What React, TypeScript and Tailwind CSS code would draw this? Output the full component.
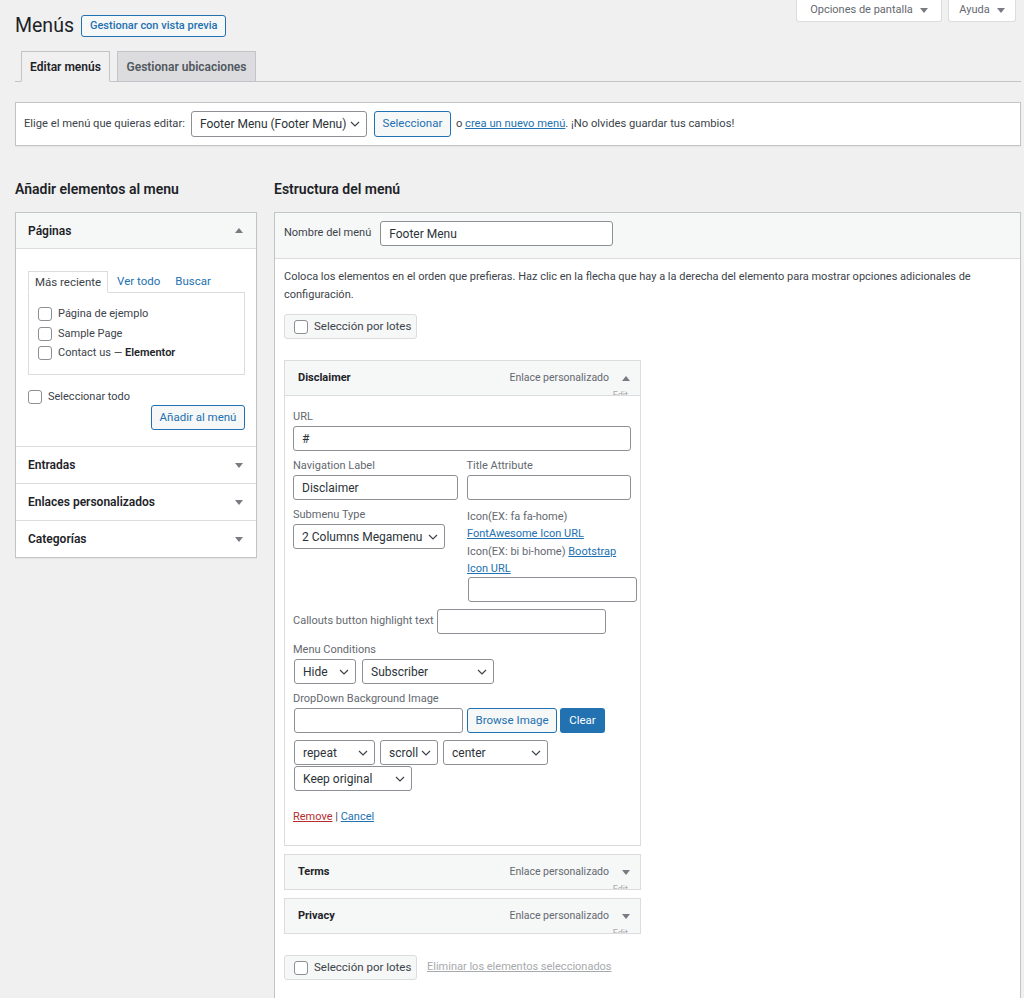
import React from "react";

function Tri({ up = false }: { up?: boolean }) {
  return (
    <svg width="8" height="5" viewBox="0 0 8 5" className="shrink-0">
      <path d={up ? "M0 5L4 0L8 5Z" : "M0 0L8 0L4 5Z"} fill="#787c82" />
    </svg>
  );
}

function Chevron() {
  return (
    <svg width="10" height="6" viewBox="0 0 10 6" className="shrink-0">
      <path d="M1 1l4 4 4-4" stroke="#3c434a" strokeWidth="1.2" fill="none" />
    </svg>
  );
}

function Box() {
  return <span className="inline-block h-[14px] w-[14px] shrink-0 rounded-[3px] border border-[#8c8f94] bg-white" />;
}

function Select({ value, w }: { value: string; w: string }) {
  return (
    <div className={`flex h-[25px] items-center justify-between rounded-[3px] border border-[#8c8f94] bg-white pl-[8px] pr-[6px] text-[12px] text-[#2c3338] ${w}`}>
      <span className="whitespace-nowrap">{value}</span>
      <Chevron />
    </div>
  );
}

function Field({ value = "", w }: { value?: string; w: string }) {
  return (
    <input
      readOnly
      value={value}
      className={`h-[25px] rounded-[3px] border border-[#8c8f94] bg-white px-[8px] text-[12px] text-[#2c3338] outline-none ${w}`}
    />
  );
}

function ScreenTab({ label, w }: { label: string; w: string }) {
  return (
    <div className={`flex h-[22px] items-center justify-center gap-[7px] rounded-b-[3px] border border-t-0 border-[#dcdcde] bg-white text-[11px] text-[#646970] ${w}`}>
      {label}
      <Tri />
    </div>
  );
}

function ItemHead({ title, open = false }: { title: string; open?: boolean }) {
  return (
    <div className="relative flex h-[36px] items-center justify-between overflow-hidden border border-[#dcdcde] bg-[#f6f7f7] pl-[13px] pr-[10px]">
      <span className="text-[11px] font-bold text-[#1d2327]">{title}</span>
      <div className="flex items-center gap-[13px]">
        <span className="text-[10.5px] text-[#646970]">Enlace personalizado</span>
        <Tri up={open} />
      </div>
      <span className="absolute bottom-[-7px] right-[12px] text-[9px] text-[#a7aaad]">Edit</span>
    </div>
  );
}

function Label({ children }: { children: React.ReactNode }) {
  return <div className="mb-[2px] text-[11px] leading-[14px] text-[#646970]">{children}</div>;
}

function BatchButton() {
  return (
    <div className="flex h-[25px] w-[133px] items-center gap-[6px] rounded-[3px] border border-[#dcdcde] bg-[#f6f7f7] pl-[9px] text-[11.5px] text-[#3c434a]">
      <Box />
      Selección por lotes
    </div>
  );
}

const pages = ["Página de ejemplo", "Sample Page"];
const sections = ["Entradas", "Enlaces personalizados", "Categorías"];

export default function App() {
  return (
    <div className="min-h-[998px] overflow-hidden bg-[#f0f0f1] pl-[15px] pr-[3px] font-['Roboto',sans-serif] text-[11px] text-[#3c434a]">
      <div className="flex items-start justify-between">
        <div className="flex items-center gap-[7px] pt-[13px]">
          <h1 className="text-[19.5px] leading-[26px] text-[#1d2327]">Menús</h1>
          <button className="h-[22px] rounded-[3px] border border-[#2271b1] bg-[#f6f7f7] px-[8px] text-[11px] font-medium text-[#2271b1]">
            Gestionar con vista previa
          </button>
        </div>
        <div className="mr-[5px] flex gap-[6px]">
          <ScreenTab label="Opciones de pantalla" w="w-[146px]" />
          <ScreenTab label="Ayuda" w="w-[68px]" />
        </div>
      </div>

      <div className="mt-[12px] flex gap-[7px] border-b border-[#c3c4c7] pl-[6px]">
        <div className="-mb-px flex h-[31px] w-[89px] items-center justify-center border border-[#c3c4c7] border-b-[#f0f0f1] bg-[#f0f0f1] text-[12px] font-semibold text-[#1d2327]">
          Editar menús
        </div>
        <div className="flex h-[30px] w-[139px] items-center justify-center border border-b-0 border-[#c3c4c7] bg-[#dcdcde] text-[12px] font-semibold text-[#50575e]">
          Gestionar ubicaciones
        </div>
      </div>

      <div className="mt-[20px] flex h-[44px] items-center border border-[#c3c4c7] bg-white pl-[8px] text-[11.2px] shadow-[0_1px_1px_rgba(0,0,0,0.04)]">
        <span>Elige el menú que quieras editar:</span>
        <div className="ml-[6px]">
          <Select value="Footer Menu (Footer Menu)" w="w-[176px] h-[26px]" />
        </div>
        <button className="ml-[7px] h-[26px] w-[77px] rounded-[3px] border border-[#2271b1] bg-[#f6f7f7] text-[11.5px] text-[#2271b1]">
          Seleccionar
        </button>
        <span className="ml-[5px]">
          o <span className="text-[#2271b1] underline">crea un nuevo menú</span>. ¡No olvides guardar tus cambios!
        </span>
      </div>

      <div className="mt-[33px] flex gap-[17px]">
        <div className="w-[242px] shrink-0">
          <h2 className="mb-[13px] text-[14px] font-semibold leading-[20px] text-[#1d2327]">Añadir elementos al menu</h2>
          <div className="border border-[#c3c4c7] bg-white shadow-[0_1px_1px_rgba(0,0,0,0.04)]">
            <div className="flex h-[36px] items-center justify-between border-b border-[#dcdcde] bg-[#f6f7f7] pl-[12px] pr-[13px]">
              <span className="text-[12px] font-semibold text-[#1d2327]">Páginas</span>
              <Tri up />
            </div>
            <div className="pb-[16px] pl-[12px] pr-[11px] pt-[21px]">
              <div className="flex items-end text-[11.5px]">
                <div className="-mb-px h-[22px] border border-b-white border-[#dcdcde] bg-white px-[6px] leading-[20px]">Más reciente</div>
                <div className="ml-[9px] leading-[22px] text-[#2271b1]">Ver todo</div>
                <div className="ml-[15px] leading-[22px] text-[#2271b1]">Buscar</div>
              </div>
              <div className="flex h-[83px] flex-col gap-[5.5px] border border-[#dcdcde] pl-[9px] pt-[14px]">
                {pages.map((p) => (
                  <div key={p} className="flex items-center gap-[6px] leading-[14px]">
                    <Box />
                    <span>{p}</span>
                  </div>
                ))}
                <div className="flex items-center gap-[6px] leading-[14px]">
                  <Box />
                  <span>
                    Contact us — <span className="font-semibold text-[#1d2327]">Elementor</span>
                  </span>
                </div>
              </div>
              <div className="mt-[15px] flex items-center gap-[6px] leading-[14px]">
                <Box />
                <span>Seleccionar todo</span>
              </div>
              <div className="mt-[1px] flex justify-end">
                <button className="h-[25px] w-[94px] rounded-[3px] border border-[#2271b1] bg-[#f6f7f7] text-[11.5px] text-[#2271b1]">
                  Añadir al menú
                </button>
              </div>
            </div>
            {sections.map((s) => (
              <div key={s} className="flex h-[37px] items-center justify-between border-t border-[#dcdcde] pl-[12px] pr-[13px]">
                <span className="text-[12px] font-semibold text-[#1d2327]">{s}</span>
                <Tri />
              </div>
            ))}
          </div>
        </div>

        <div className="min-w-0 flex-1">
          <h2 className="mb-[13px] text-[14px] font-semibold leading-[20px] text-[#1d2327]">Estructura del menú</h2>
          <div className="min-h-[800px] border border-[#c3c4c7] bg-white">
            <div className="flex h-[46px] items-center gap-[9px] border-b border-[#dcdcde] bg-[#f6f7f7] pb-[4px] pl-[9px]">
              <span>Nombre del menú</span>
              <Field value="Footer Menu" w="w-[233px]" />
            </div>
            <div className="pl-[9px] pr-[20px] pt-[9px]">
              <p className="leading-[18px]">
                Coloca los elementos en el orden que prefieras. Haz clic en la flecha que hay a la derecha del elemento para mostrar opciones adicionales de configuración.
              </p>
              <div className="mt-[10px]">
                <BatchButton />
              </div>

              <div className="mt-[21px] w-[357px]">
                <ItemHead title="Disclaimer" open />
                <div className="border border-t-0 border-[#dcdcde] pb-[21px] pl-[8px] pr-[9px] pt-[14px]">
                  <Label>URL</Label>
                  <Field value="#" w="w-full" />

                  <div className="mt-[8px] flex gap-[9px]">
                    <div className="w-[165px]">
                      <Label>Navigation Label</Label>
                      <Field value="Disclaimer" w="w-full" />
                    </div>
                    <div className="w-[165px]">
                      <Label>Title Attribute</Label>
                      <Field w="w-full" />
                    </div>
                  </div>

                  <div className="mt-[8px] flex gap-[22px]">
                    <div className="w-[152px]">
                      <Label>Submenu Type</Label>
                      <Select value="2 Columns Megamenu" w="w-[152px]" />
                    </div>
                    <div className="w-[170px] text-[11px] leading-[17.3px] text-[#646970]">
                      <div>Icon(EX: fa fa-home)</div>
                      <div className="text-[#2271b1] underline">FontAwesome Icon URL</div>
                      <div>
                        Icon(EX: bi bi-home) <span className="text-[#2271b1] underline">Bootstrap Icon URL</span>
                      </div>
                      <Field w="ml-[1px] w-[169px]" />
                    </div>
                  </div>

                  <div className="mt-[7px] flex items-center gap-[3px]">
                    <span className="text-[#646970]">Callouts button highlight text</span>
                    <Field w="w-[169px]" />
                  </div>

                  <div className="mt-[9px]">
                    <Label>Menu Conditions</Label>
                    <div className="flex gap-[6px] pl-[1px]">
                      <Select value="Hide" w="w-[62px]" />
                      <Select value="Subscriber" w="w-[132px]" />
                    </div>
                  </div>

                  <div className="mt-[8px]">
                    <Label>DropDown Background Image</Label>
                    <div className="flex gap-[3px] pl-[1px]">
                      <Field w="w-[169px]" />
                      <button className="ml-[1px] h-[25px] w-[90px] rounded-[3px] border border-[#2271b1] bg-[#f6f7f7] text-[11.5px] text-[#2271b1]">
                        Browse Image
                      </button>
                      <button className="h-[25px] w-[45px] rounded-[3px] bg-[#2271b1] text-[11.5px] text-white">Clear</button>
                    </div>
                  </div>

                  <div className="mt-[7px] flex flex-wrap gap-x-[5px] gap-y-[1px] pl-[1px]">
                    <Select value="repeat" w="w-[81px]" />
                    <Select value="scroll" w="w-[58px]" />
                    <Select value="center" w="w-[105px]" />
                    <Select value="Keep original" w="w-[118px]" />
                  </div>

                  <div className="mt-[19px] leading-[14px]">
                    <span className="text-[#b32d2e] underline">Remove</span> | <span className="text-[#2271b1] underline">Cancel</span>
                  </div>
                </div>
              </div>

              <div className="mt-[8px] w-[357px]">
                <ItemHead title="Terms" />
              </div>
              <div className="mt-[8px] w-[357px]">
                <ItemHead title="Privacy" />
              </div>

              <div className="mt-[21px] flex items-center gap-[10px]">
                <BatchButton />
                <span className="text-[#a7aaad] underline">Eliminar los elementos seleccionados</span>
              </div>
            </div>
          </div>
        </div>
      </div>
    </div>
  );
}
